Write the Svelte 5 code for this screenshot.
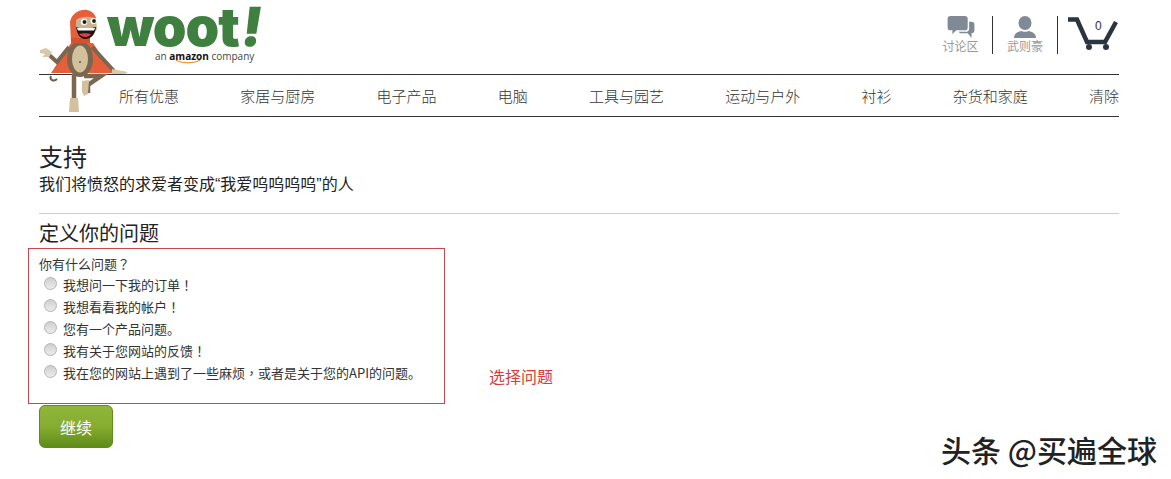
<script>
	const navItems = ['所有优惠', '家居与厨房', '电子产品', '电脑', '工具与园艺', '运动与户外', '衬衫', '杂货和家庭', '清除'];
	const options = [
		'我想问一下我的订单！',
		'我想看看我的帐户！',
		'您有一个产品问题。',
		'我有关于您网站的反馈！',
		'我在您的网站上遇到了一些麻烦，或者是关于您的API的问题。'
	];

	// full-width marks sit centred in the cell in the original, the TC face does that
	const parts = (text) => text.split(/([！？，])/);
</script>

<div class="page">
	<svg class="monkey" viewBox="30 0 110 120" width="110" height="120" aria-hidden="true">
		<path d="M51 76c-2 4 3 6 6 3" fill="none" stroke="#6f5a45" stroke-width="2" />
		<path d="M71 43 51 73l62 0L93 43z" fill="#e5603a" />
		<path d="M69 47 57 62 47 53" fill="none" stroke="#7b6650" stroke-width="4" />
		<path d="M40 50l6-2 6 4-3 5-7 0 3-3-5-1z" fill="#d9c9a8" />
		<path d="M92 47l22 24" fill="none" stroke="#7b6650" stroke-width="4" />
		<path d="M112 69l16 3-3 2-13 0z" fill="#d9c9a8" />
		<ellipse cx="80" cy="59" rx="13" ry="18" fill="#7b6650" />
		<ellipse cx="80" cy="59" rx="8" ry="13.500" fill="#d2c19c" />
		<circle cx="80" cy="62" r="0.9" fill="#5b4838" />
		<path d="M74 74v26" stroke="#7b6650" stroke-width="4.500" fill="none" />
		<path d="M70 98h8l1 14h-10z" fill="#d2c19c" />
		<path d="M84 76h17l-13 9v8" stroke="#7b6650" stroke-width="4.500" fill="none" />
		<path d="M82 81l7-1-1 14-4 2-2-4z" fill="#d2c19c" />
		<path d="M71 42 70 22c2-9 10-13 17-12 5 1 8 4 9 8l-8 16 2 8z" fill="#e5603a" />
		<path d="M71 38h19v5H71z" fill="#d9502f" />
		<path d="M76 20c5-4 15-4 20-1l1 10-5 7-11 1-5-8z" fill="#c9b48e" />
		<circle cx="84" cy="22" r="3.200" fill="#fff" />
		<circle cx="84.500" cy="22" r="2" fill="#1d1d1d" />
		<circle cx="93.500" cy="21" r="3" fill="#fff" />
		<circle cx="94" cy="21" r="1.900" fill="#1d1d1d" />
		<path d="M76 27c6 2 13 2 20 0-1 8-5 12-11 12-5 0-8-5-9-12z" fill="#1d1414" />
		<path d="M79 34c3-1 9-1 12 0-2 4-9 4-12 0z" fill="#d8434b" />
		<path d="M77 28h18l-1 2.500H78z" fill="#fff" />
	</svg>

	<header class="top">
		<div class="logo">
			<div class="wordmark">woot<span class="bang">!</span></div>
			<div class="tagline">an <b>amazon<svg class="smile" viewBox="0 0 30 4" width="26" height="4" aria-hidden="true"><path d="M1 0c8 4 20 4 28 0" fill="none" stroke="#e8972b" stroke-width="1.300" /></svg></b> company</div>
		</div>
		<div class="tools">
			<a class="tool chat" href="#forums">
				<svg viewBox="0 0 28 23" width="28" height="23" aria-hidden="true">
					<path d="M3 0h15a3 3 0 0 1 3 3v9a3 3 0 0 1-3 3H9l-4 4v-4H3a3 3 0 0 1-3-3V3a3 3 0 0 1 3-3z" fill="#7f8a96" />
					<path d="M22.500 6H25a3 3 0 0 1 3 3v6a3 3 0 0 1-3 3v5l-4-5h-8l-1.500-1.500H19a3.500 3.500 0 0 0 3.500-3.500z" fill="#7f8a96" />
				</svg>
				<span>讨论区</span>
			</a>
			<a class="tool user" href="#account">
				<svg viewBox="0 0 22 22" width="22" height="22" aria-hidden="true">
					<ellipse cx="11" cy="7" rx="6.500" ry="7" fill="#7f8a96" />
					<path d="M0 22c0-4 3-6 7-7 2 1 6 1 8 0 4 1 7 3 7 7z" fill="#7f8a96" />
				</svg>
				<span>武则豪</span>
			</a>
			<a class="cart" href="#cart">
				<svg viewBox="0 0 52 34" width="52" height="34" aria-hidden="true">
					<path d="M1 2.500h9l10 22.500h18l11-20" fill="none" stroke="#2b3440" stroke-width="4.500" />
					<circle cx="22" cy="30" r="3" fill="#2b3440" />
					<circle cx="39" cy="30" r="3" fill="#2b3440" />
				</svg>
				<span class="count">0</span>
			</a>
		</div>
	</header>

	<nav class="nav">
		{#each navItems as item}
			<a href="#nav">{item}</a>
		{/each}
	</nav>

	<section class="intro">
		<h1>支持</h1>
		<p>我们将愤怒的求爱者变成“我爱呜呜呜呜”的人</p>
	</section>

	<section class="define">
		<h2>定义你的问题</h2>
		<div class="form-row">
			<div class="question-box">
				<div class="question">你有什么问题<span class="mark">？</span></div>
				{#each options as option}
					<label class="option">
						<input type="radio" name="issue" />
						<span>
							{#each parts(option) as part, i}{#if i % 2}<span class="mark">{part}</span>{:else}{part}{/if}{/each}
						</span>
					</label>
				{/each}
			</div>
			<div class="error">选择问题</div>
		</div>
		<button class="continue" type="button">继续</button>
	</section>

	<div class="watermark">头条 @买遍全球</div>
</div>

<style>
	:global(body) {
		margin: 0;
		background: #fff;
	}

	.page {
		position: relative;
		box-sizing: border-box;
		width: 1171px;
		height: 479px;
		overflow: hidden;
		padding: 0 52px 0 39px;
		font-family: "Noto Sans CJK SC", "Liberation Sans", sans-serif;
		color: #333;
	}

	a {
		color: inherit;
		text-decoration: none;
	}

	.monkey {
		position: absolute;
		left: 30px;
		top: 0;
		z-index: 1;
	}

	.top {
		display: flex;
		justify-content: space-between;
		height: 74px;
		border-bottom: 1px solid #333;
	}

	.logo {
		padding: 3px 0 0 68px;
	}

	.wordmark {
		height: 47px;
		font-family: Inter, sans-serif;
		font-size: 54px;
		font-weight: 900;
		line-height: 47px;
		letter-spacing: -1px;
		color: #3f8040;
		white-space: nowrap;
	}

	.bang {
		display: inline-block;
		transform: skewX(-8deg);
		transform-origin: bottom;
	}

	.tagline {
		margin: 0 0 0 48px;
		font-family: "Open Sans", sans-serif;
		font-size: 10px;
		line-height: 13px;
		color: #444;
		white-space: nowrap;
	}

	.tagline b {
		position: relative;
		color: #111;
	}

	.smile {
		position: absolute;
		left: 6px;
		top: 11px;
	}

	.tools {
		display: flex;
		align-items: flex-start;
		padding-top: 16px;
	}

	.tool {
		display: flex;
		flex-direction: column;
		align-items: center;
		height: 38px;
		padding: 0 13px;
		font-size: 12px;
		line-height: 16px;
		color: #999;
		border-right: 1px solid #333;
	}

	.tool svg {
		display: block;
		height: 23px;
	}

	.tool.chat {
		width: 37px;
	}

	.tool.user {
		width: 36px;
		padding: 0 14px;
	}

	.cart {
		position: relative;
		display: block;
		margin: 1px 0 0 9px;
		width: 52px;
		height: 34px;
	}

	.cart svg {
		display: block;
	}

	.count {
		position: absolute;
		left: 28px;
		top: 2px;
		font-family: "Liberation Sans", sans-serif;
		font-size: 12px;
		line-height: 14px;
		color: #333;
	}

	.nav {
		display: flex;
		justify-content: space-between;
		align-items: center;
		height: 41px;
		padding-left: 80px;
		font-size: 15px;
		font-weight: 300;
		border-bottom: 1px solid #333;
		color: #333;
	}

	.intro {
		margin-top: 24px;
		padding-bottom: 17px;
		border-bottom: 1px solid #ccc;
	}

	h1 {
		margin: 0 0 2px;
		font-size: 24px;
		font-weight: 400;
		line-height: 30px;
		color: #222;
	}

	.intro p {
		margin: 0;
		font-family: "Liberation Sans", "Noto Sans CJK SC", sans-serif;
		font-size: 16px;
		line-height: 23px;
		color: #222;
	}

	h2 {
		margin: 5px 0 1px;
		font-size: 20px;
		font-weight: 400;
		line-height: 28px;
		color: #222;
	}

	.form-row {
		display: flex;
		align-items: flex-start;
	}

	.question-box {
		box-sizing: border-box;
		width: 417px;
		height: 156px;
		margin-left: -11px;
		padding: 5px 10px;
		border: 1px solid #c9474c;
		font-size: 13px;
		line-height: 20px;
		color: #333;
	}

	.question {
		height: 21px;
	}

	.mark {
		font-family: "Noto Sans CJK TC", sans-serif;
	}

	.option {
		display: flex;
		align-items: flex-start;
		height: 22px;
		white-space: nowrap;
	}

	.option input {
		appearance: none;
		box-sizing: border-box;
		width: 13px;
		height: 13px;
		margin: 2px 6px 0 5px;
		flex: none;
		border: 1px solid #b4b4b4;
		border-radius: 50%;
		background: linear-gradient(#cfcfcf, #ececec);
	}

	.error {
		margin: 117px 0 0 44px;
		font-size: 16px;
		line-height: 22px;
		color: #d93a3a;
	}

	.continue {
		display: block;
		width: 74px;
		height: 43px;
		margin-top: 1px;
		padding: 0;
		border: 1px solid #5f8a1c;
		border-radius: 6px;
		background: linear-gradient(#8fb63a 0%, #86ad30 50%, #5e8c18 100%);
		font-family: inherit;
		font-size: 16px;
		color: #fff;
	}

	.watermark {
		position: absolute;
		left: 941px;
		top: 429px;
		font-size: 30px;
		font-weight: 500;
		line-height: 40px;
		color: #222;
		white-space: nowrap;
		text-shadow: 1px 1px 0 #fff;
	}
</style>
